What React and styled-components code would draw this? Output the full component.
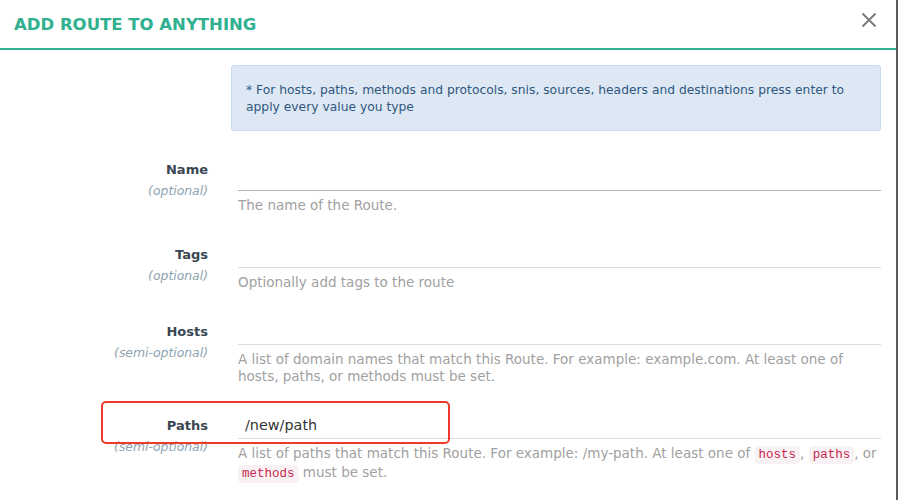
import styled, { createGlobalStyle } from "styled-components";

const GlobalStyle = createGlobalStyle`
  html, body {
    margin: 0;
    padding: 0;
    background: #fff;
  }
  body {
    font-family: "DejaVu Sans", "Liberation Sans", sans-serif;
  }
`;

const Modal = styled.div`
  width: 896px;
  height: 500px;
  overflow: hidden;
  background: #fff;
  border-right: 2px solid #5a5a5a;
`;

const Header = styled.div`
  height: 48px;
  display: flex;
  align-items: center;
  justify-content: space-between;
  padding: 0 20px 0 14px;
  border-bottom: 2px solid #35b294;
`;

const Title = styled.h4`
  margin: 0;
  font-size: 16.5px;
  font-weight: 700;
  color: #2fb08f;
  padding-top: 1px;
`;

const CloseBtn = styled.button`
  border: 0;
  background: none;
  padding: 0;
  width: 16px;
  height: 16px;
  display: flex;
  margin-top: -8px;
  margin-right: -1px;
  cursor: pointer;
`;

const Body = styled.div`
  padding: 15px 15px 0 0;
`;

const Field = styled.div`
  position: relative;
  display: grid;
  grid-template-columns: 208px 1fr;
  column-gap: 30px;
  margin-bottom: ${(p) => p.gap || 27}px;
`;

const InfoBox = styled.div`
  grid-column: 2;
  margin-left: -7px;
  background: #dde8f4;
  border: 1px solid #c6dbee;
  border-radius: 3px;
  padding: 16px 14px 14px;
  color: #30577f;
  font-size: 12.3px;
  line-height: 17px;
`;

const LabelCol = styled.div`
  text-align: right;
`;

const Label = styled.div`
  font-size: 13px;
  font-weight: 700;
  color: #3a4752;
  line-height: 28px;
`;

const SubLabel = styled.div`
  font-size: 12.4px;
  font-style: italic;
  color: #8ea3b0;
  line-height: 14px;
`;

const InputCol = styled.div`
  display: flex;
  flex-direction: column;
`;

const Input = styled.input`
  box-sizing: border-box;
  height: ${(p) => p.h || 27}px;
  border: 0;
  border-bottom: 1px solid ${(p) => (p.$active ? "#b2b2b2" : "#dcdcdc")};
  outline: none;
  padding: 0 7px;
  padding-bottom: ${(p) => (p.h && p.h > 27 ? p.h - 27 : 0)}px;
  font-family: "DejaVu Sans", "Liberation Sans", sans-serif;
  font-size: 14.4px;
  color: #333;
  background: transparent;
`;

const Help = styled.div`
  margin-top: 6px;
  font-size: 13.5px;
  line-height: 17px;
  color: #a1a1a1;
`;

const Code = styled.code`
  font-family: "Liberation Mono", "DejaVu Sans Mono", monospace;
  font-size: 12.5px;
  color: #c7254e;
  background: #f9f2f4;
  border-radius: 4px;
  padding: 2px 4px;
`;

const Highlight = styled.div`
  position: absolute;
  left: 101px;
  top: -11px;
  width: 349px;
  height: 43px;
  box-sizing: border-box;
  border: 2px solid #ec3a2b;
  border-radius: 5px;
  pointer-events: none;
`;

function CloseIcon() {
  return (
    <svg width="16" height="16" viewBox="0 0 16 16">
      <path d="M1.5 1.5 L14.5 14.5 M14.5 1.5 L1.5 14.5" stroke="#777" strokeWidth="1.8" />
    </svg>
  );
}

const fields = [
  {
    label: "Name",
    sub: "(optional)",
    h: 35,
    active: true,
    help: "The name of the Route.",
  },
  {
    label: "Tags",
    sub: "(optional)",
    help: "Optionally add tags to the route",
  },
  {
    label: "Hosts",
    sub: "(semi-optional)",
    help: (
      <>
        A list of domain names that match this Route. For example: example.com. At least one of
        <br />
        hosts, paths, or methods must be set.
      </>
    ),
  },
  {
    label: "Paths",
    sub: "(semi-optional)",
    value: "/new/path",
    mark: true,
    help: (
      <>
        A list of paths that match this Route. For example: /my-path. At least one of <Code>hosts</Code>, <Code>paths</Code>, or
        <br />
        <Code>methods</Code> must be set.
      </>
    ),
  },
];

export default function App() {
  return (
    <Modal>
      <GlobalStyle />
      <Header>
        <Title>ADD ROUTE TO ANYTHING</Title>
        <CloseBtn aria-label="close">
          <CloseIcon />
        </CloseBtn>
      </Header>
      <Body>
        <Field gap={25}>
          <InfoBox>
            * For hosts, paths, methods and protocols, snis, sources, headers and destinations press enter to apply every value you type
          </InfoBox>
        </Field>
        {fields.map((f) => (
          <Field key={f.label}>
            <LabelCol>
              <Label>{f.label}</Label>
              <SubLabel>{f.sub}</SubLabel>
            </LabelCol>
            <InputCol>
              <Input h={f.h} $active={f.active} defaultValue={f.value || ""} />
              <Help>{f.help}</Help>
            </InputCol>
            {f.mark && <Highlight />}
          </Field>
        ))}
      </Body>
    </Modal>
  );
}
